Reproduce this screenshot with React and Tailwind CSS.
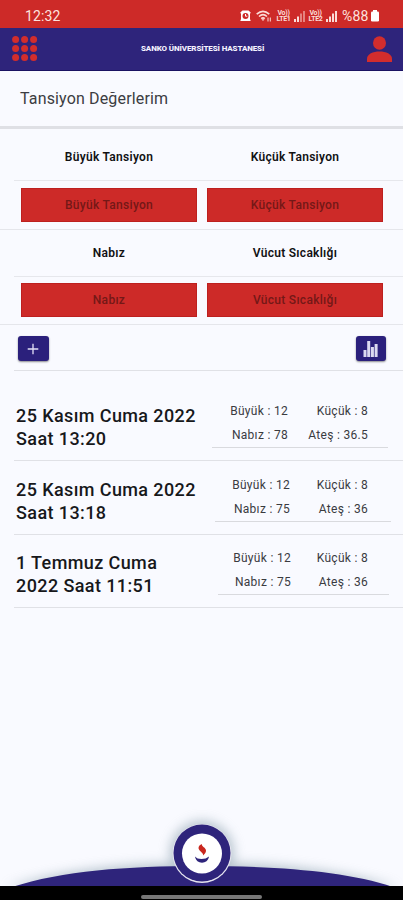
const readings = [
  {
    date: ['25 Kasım Cuma 2022', 'Saat 13:20'],
    cells: ['Büyük : 12', 'Küçük : 8', 'Nabız : 78', 'Ateş : 36.5'],
    panel: 'ml-[212px] w-[176px]',
    columns: 'grid-cols-[76px_80px]',
  },
  {
    date: ['25 Kasım Cuma 2022', 'Saat 13:18'],
    cells: ['Büyük : 12', 'Küçük : 8', 'Nabız : 75', 'Ateş : 36'],
    panel: 'ml-[215px] w-[176px]',
    columns: 'grid-cols-[75px_78px]',
  },
  {
    date: ['1 Temmuz Cuma', '2022 Saat 11:51'],
    cells: ['Büyük : 12', 'Küçük : 8', 'Nabız : 75', 'Ateş : 36'],
    panel: 'ml-[218px] w-[171px]',
    columns: 'grid-cols-[73px_77px]',
  },
];

function Signal({ level }) {
  return (
    <svg width="11" height="12" viewBox="0 0 11 12" fill="#fbdcd8">
      <rect x="0" y="9" width="2" height="3" />
      <rect x="3" y="6.5" width="2" height="5.5" opacity={level > 1 ? 1 : 0.8} />
      <rect x="6" y="3.5" width="2" height="8.5" opacity={level > 2 ? 1 : 0.5} />
      <rect x="9" y="1" width="2" height="11" opacity={level > 3 ? 1 : 0.5} />
    </svg>
  );
}

function Lte({ n }) {
  return (
    <div className="flex w-[15px] flex-col items-center text-[7px] leading-[6.5px] font-bold tracking-[-0.3px] text-[#fbdcd8]">
      <span>Vo))</span>
      <span>LTE{n}</span>
    </div>
  );
}

function StatusBar() {
  return (
    <div className="flex h-[28px] items-center bg-[#cd2a28] pt-[4px] pl-[25px] text-[#fde3df]">
      <span className="w-[215px] text-[14px] leading-4 tracking-[0.1px]">12:32</span>
      <svg width="11" height="12" viewBox="0 0 11 12" className="shrink-0">
        <path d="M.3 2.5 2.5.5h6l2.2 2-.7 1.5v5l.7 2H.3l.7-2V4z" fill="#fff" />
        <circle cx="5.5" cy="6" r="3" fill="#cd2a28" />
        <path d="M5.5 4v2.2h1.8" stroke="#fff" strokeWidth="1" fill="none" />
      </svg>
      <svg width="16" height="12" viewBox="0 0 16 12" className="ml-[5px] shrink-0" fill="none" stroke="#fbdcd8" strokeWidth="1.6">
        <path d="M.7 4.2Q7 -1.5 13.3 4.2M3 6.5q4-3.6 8 0M5.2 8.6Q7 7 8.8 8.6" />
        <path d="M7 11 5.5 9.2h3z" fill="#fbdcd8" stroke="none" />
        <path d="M12 7.5v4M14.3 7.5v4" strokeWidth="1" />
      </svg>
      <div className="ml-[4px] flex items-center gap-[3px]">
        <Lte n={1} />
        <Signal level={2} />
        <Lte n={2} />
        <Signal level={4} />
      </div>
      <span className="ml-[5px] text-[14px] leading-4 tracking-[0.2px]">%88</span>
      <svg width="8" height="12" viewBox="0 0 8 12" className="ml-[2px]" fill="#fff">
        <rect x="2" y="0" width="4" height="2" />
        <rect x="0" y="1.5" width="8" height="10" rx="1.3" />
      </svg>
    </div>
  );
}

function Header() {
  return (
    <header className="flex h-[43px] items-center border-b border-[#1a1262] bg-[#2e247b]">
      <svg width="26" height="26" viewBox="0 0 26 26" className="ml-[12px]" fill="#d22d2d">
        {[3.6, 12.6, 21.6].map((y) =>
          [3.6, 12.6, 21.6].map((x) => <circle key={`${x}-${y}`} cx={x} cy={y} r="3.5" />)
        )}
      </svg>
      <h1 className="ml-[103px] w-[226px] text-[8px] leading-[10px] font-extrabold tracking-[-0.11px] whitespace-nowrap text-[#f4f2ff]">
        SANKO ÜNİVERSİTESİ HASTANESİ
      </h1>
      <svg width="25" height="28" viewBox="0 0 25 28" fill="#d22d2d">
        <ellipse cx="12.5" cy="8" rx="6.5" ry="6.7" />
        <path d="M0 27v-3.2C0 19 6 16.500 12.5 16.500S25 19 25 23.800V27z" />
      </svg>
    </header>
  );
}

function FieldPair({ left, right }) {
  return (
    <section className="flex h-[95.500px] flex-col border-b border-[#e5e6eb]">
      <div className="ml-[14px] grid h-[47px] shrink-0 grid-cols-2 gap-[10px] border-b border-[#e6e7ec] pr-[20px] pl-[7px] text-center text-[12px] leading-[46px] font-semibold tracking-[0.28px] text-[#111113]">
        <span>{left}</span>
        <span>{right}</span>
      </div>
      <div className="mx-[21px] mt-[6.500px] mr-[20px] grid h-[34px] shrink-0 grid-cols-2 gap-[10px] text-center text-[12px] leading-[32px] font-medium tracking-[0.3px] text-[#741817]">
        <span className="border border-[#bd201f] bg-[#cd2a28]">{left}</span>
        <span className="border border-[#bd201f] bg-[#cd2a28]">{right}</span>
      </div>
    </section>
  );
}

function Actions() {
  return (
    <div className="flex h-[45px] items-start justify-between pt-[11px] pr-[17px] pl-[18px]">
      <button className="flex h-[25px] w-[30.500px] items-center justify-center rounded-[3px] bg-[#2b207c] shadow-[0_1px_2px_rgba(0,0,0,0.45)]">
        <svg width="12" height="12" viewBox="0 0 12 12" stroke="#e4e1f6" strokeWidth="1.3">
          <path d="M6 .7v10.600M.7 6h10.600" />
        </svg>
      </button>
      <button className="flex h-[25px] w-[30.500px] items-center justify-center rounded-[3px] bg-[#2b207c] shadow-[0_1px_2px_rgba(0,0,0,0.45)]">
        <svg width="15" height="16" viewBox="0 0 15 16" fill="#dcdaf0">
          <rect x=".5" y="9" width="3" height="7" />
          <rect x="4.200" y="0" width="3" height="16" />
          <rect x="7.900" y="6" width="3" height="10" />
          <rect x="11.600" y="3" width="3" height="13" />
        </svg>
      </button>
    </div>
  );
}

function Reading({ item, first }) {
  return (
    <li className={`${first ? 'h-[90px] pt-[33px]' : 'h-[73.500px] pt-[16.500px]'} ml-[14px] flex items-start border-b border-[#e0e1e6]`}>
      <div className="ml-[2px] w-0 shrink-0 text-[18px] leading-[23px] font-medium tracking-[0.4px] whitespace-nowrap text-[#17181b]">
        <p>{item.date[0]}</p>
        <p>{item.date[1]}</p>
      </div>
      <div className={`${item.panel} -mt-[5px] -translate-x-[16px] shrink-0 border-b border-[#d9dade]`}>
        <div className={`${item.columns} grid text-right text-[12px] leading-[24.200px] tracking-[0.3px] whitespace-nowrap text-[#3a3b3f]`}>
          {item.cells.map((text) => (
            <span key={text}>{text}</span>
          ))}
        </div>
      </div>
    </li>
  );
}

function Footer() {
  return (
    <footer className="mt-auto">
      <svg width="403" height="96" viewBox="0 0 403 96" className="block">
        <defs>
          <filter id="glow" x="-20%" y="-60%" width="140%" height="220%">
            <feGaussianBlur stdDeviation="6" />
          </filter>
        </defs>
        <g filter="url(#glow)" fill="#879dab" opacity=".6">
          <path d="M6 84Q82 59 201 59T398 84z" />
          <circle cx="202" cy="49" r="32" />
        </g>
        <path d="M12 83C62 67 126 62 201 62s145 5 192 21z" fill="#2e247b" />
        <rect y="82" width="403" height="14" fill="#000" />
        <circle cx="202" cy="49.500" r="29.500" fill="#e6e5f0" />
        <circle cx="202" cy="49" r="28.500" fill="#2e247b" />
        <circle cx="202" cy="49.500" r="20" fill="#fff" />
        <path d="M201.800 40c-.3 2.800 4.200 3.300 4.200 6.800 0 2-1.300 3.200-2.800 4.700.4-2.800-4.600-4.500-4.700-7.500 0-1.800 1.500-3.200 3.300-4z" fill="#c9281f" />
        <path d="M195 52.500q2 2.500 6.500 2.500t7.500-2.500c-.8 4.200-3.500 6.200-7 6.200s-6.200-2-7-6.200z" fill="#2e247b" />
        <rect x="141" y="91" width="121" height="4" rx="2" fill="#777" />
      </svg>
    </footer>
  );
}

export default function App() {
  return (
    <main className="flex h-[900px] w-[403px] flex-col overflow-hidden bg-[#f9faff] font-[Roboto,sans-serif]">
      <StatusBar />
      <Header />
      <h2 className="h-[58px] border-b-[3px] border-[#dfe0e5] pl-[20px] text-[16px] leading-[55px] tracking-[0.15px] text-[#3c3d42]">
        Tansiyon Değerlerim
      </h2>
      <div className="h-[5px]" />
      <FieldPair left="Büyük Tansiyon" right="Küçük Tansiyon" />
      <FieldPair left="Nabız" right="Vücut Sıcaklığı" />
      <Actions />
      <div className="ml-[14px] border-b border-[#e0e1e6]" />
      <ul>
        {readings.map((item, i) => (
          <Reading key={i} item={item} first={i === 0} />
        ))}
      </ul>
      <Footer />
    </main>
  );
}
